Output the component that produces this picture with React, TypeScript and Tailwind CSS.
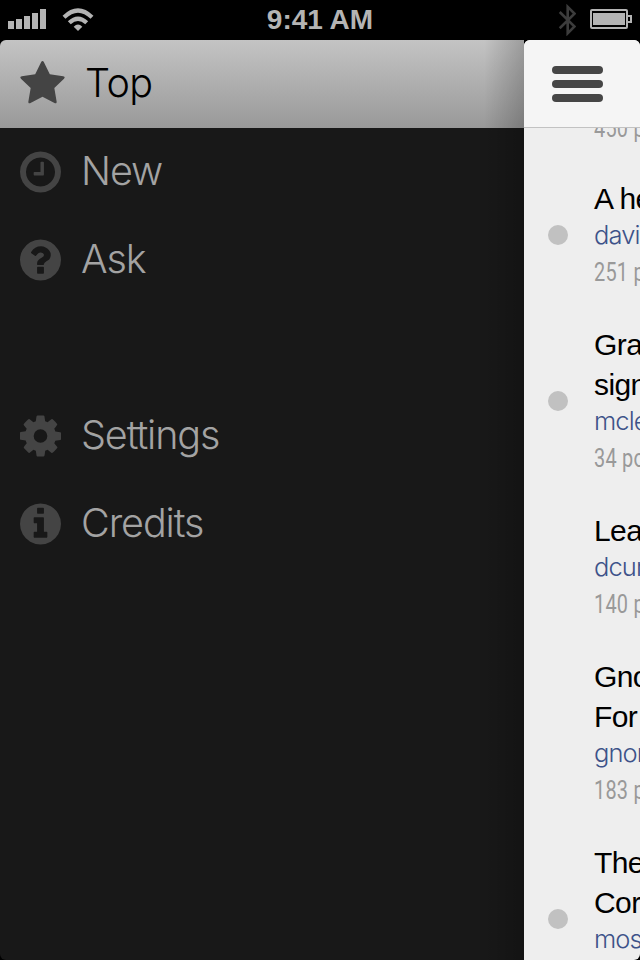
import type { ReactNode } from 'react';

const DISC = 'm0 0q0 209-103 385.5t-279.5 279.5-385.5 103-385.5-103-279.5-279.5-103-385.5 103-385.5 279.5-279.5 385.5-103 385.5 103 279.5 279.5 103 385.5z';

const ICONS = {
  star: 'M1728 647q0 22-26 48l-363 354 86 500q1 7 1 20 0 21-10.5 35.5t-30.5 14.5q-19 0-40-12l-449-236-449 236q-22 12-40 12-21 0-31.5-14.5t-10.5-35.5q0-6 2-20l86-500-364-354q-25-27-25-48 0-37 56-46l502-73 225-455q19-41 49-41t49 41l225 455 502 73q56 9 56 46z',
  clock: 'M1024 544v448q0 14-9 23t-23 9h-320q-14 0-23-9t-9-23v-64q0-14 9-23t23-9h224v-352q0-14 9-23t23-9h64q14 0 23 9t9 23zm416 352q0-148-73-273t-198-198-273-73-273 73-198 198-73 273 73 273 198 198 273 73 273-73 198-198 73-273zm224 0' + DISC,
  question: 'M1024 1376v-192q0-14-9-23t-23-9h-192q-14 0-23 9t-9 23v192q0 14 9 23t23 9h192q14 0 23-9t9-23zm256-672q0-88-55.5-163t-138.5-116-170-41q-243 0-371 213-15 24 8 42l132 100q7 6 19 6 16 0 25-12 53-68 86-92 34-24 86-24 48 0 85.5 26t37.5 59q0 38-20 61t-68 45q-63 28-115.5 86.5t-52.5 125.5v36q0 14 9 23t23 9h192q14 0 23-9t9-23q0-19 21.5-49.5t54.5-49.5q32-18 49-28.5t46-35 44.5-48 28-60.5 12.5-81zm384 192' + DISC,
  cog: 'M1152 896q0-106-75-181t-181-75-181 75-75 181 75 181 181 75 181-75 75-181zm512-109v222q0 12-8 23t-20 13l-185 28q-19 54-39 91 35 50 107 138 10 12 10 25t-9 23q-27 37-99 108t-94 71q-12 0-26-9l-138-108q-44 23-91 38-16 136-29 186-7 28-36 28h-222q-14 0-24.5-8.5t-11.5-21.5l-28-184q-49-16-90-37l-141 107q-10 9-25 9-14 0-25-11-126-114-165-168-7-10-7-23 0-12 8-23 15-21 51-66.5t54-70.5q-27-50-41-99l-183-27q-13-2-21-12.5t-8-23.5v-222q0-12 8-23t19-13l186-28q14-46 39-92-40-57-107-138-10-12-10-24 0-10 9-23 26-36 98.5-107.5t94.5-71.5q13 0 26 10l138 107q44-23 91-38 16-136 29-186 7-28 36-28h222q14 0 24.5 8.5t11.5 21.5l28 184q49 16 90 37l142-107q9-9 24-9 13 0 25 10 129 119 165 170 7 8 7 22 0 12-8 23-15 21-51 66.5t-54 70.5q26 50 41 98l183 28q13 2 21 12.5t8 23.5z',
  info: 'M1152 1376v-160q0-14-9-23t-23-9h-96v-512q0-14-9-23t-23-9h-320q-14 0-23 9t-9 23v160q0 14 9 23t23 9h96v320h-96q-14 0-23 9t-9 23v160q0 14 9 23t23 9h448q14 0 23-9t9-23zm-128-896v-160q0-14-9-23t-23-9h-192q-14 0-23 9t-9 23v160q0 14 9 23t23 9h192q14 0 23-9t9-23zm640 416' + DISC,
};

function MenuIcon({ name }: { name: keyof typeof ICONS }) {
  return (
    <svg viewBox="128 128 1536 1536" className="h-[42px] w-[41px] shrink-0 overflow-visible fill-[#444]">
      <path d={ICONS[name]} />
    </svg>
  );
}

function MenuRow({ icon, children }: { icon: keyof typeof ICONS; children: ReactNode }) {
  return (
    <div className="flex h-[88px] items-center pl-5 text-[39.5px] font-light text-[#a3a3a3]">
      <MenuIcon name={icon} />
      <span className="ml-5 tracking-[-1.1px]">{children}</span>
    </div>
  );
}

function StatusBar() {
  return (
    <div className="grid h-10 grid-cols-3 items-center bg-black">
      <div className="flex items-center pl-2">
        <div className="flex h-5 items-end gap-0.5 pb-px">
          <i className="h-2 w-1.5 bg-[#b4b4b4]" />
          <i className="h-2.5 w-1.5 bg-[#b4b4b4]" />
          <i className="h-[13px] w-1.5 bg-[#b4b4b4]" />
          <i className="h-4 w-1.5 bg-[#b4b4b4]" />
          <i className="h-5 w-1.5 bg-[#b4b4b4]" />
        </div>
        <svg viewBox="0 0 32 24" className="ml-4 h-6 w-8" fill="none" stroke="#b4b4b4">
          <path d="M2 9.2Q16-4.2 30 9.2" strokeWidth="4.2" />
          <path d="M7.3 14.8Q16 6.6 24.7 14.8" strokeWidth="4.2" />
          <path d="M11.7 18.8Q16 14.4 20.3 18.8L16 23Z" fill="#b4b4b4" stroke="none" />
        </svg>
      </div>
      <div className="text-center font-['Liberation_Sans',sans-serif] text-[28px] leading-10 font-bold text-[#b4b4b4]">9:41 AM</div>
      <div className="flex items-center justify-end pr-2">
        <svg viewBox="0 0 18 32" className="h-8 w-[18px]" fill="none" stroke="#3c3c3c" strokeWidth="2.6">
          <path d="M1.7 8L16.5 22.5L9.7 29.3V2.9L16.5 9.7L1.7 24.2" />
        </svg>
        <svg viewBox="0 0 42 20" className="ml-[14px] h-5 w-[42px] -translate-y-px">
          <rect x="1" y="1" width="36" height="18" rx="1" fill="none" stroke="#b4b4b4" strokeWidth="2" />
          <rect x="3" y="4" width="32" height="12" fill="#b4b4b4" />
          <path d="M38 7h3v6h-3" fill="none" stroke="#b4b4b4" strokeWidth="2" />
        </svg>
      </div>
    </div>
  );
}

interface Story {
  title: string[];
  author: string;
  points: string;
  unread?: boolean;
}

const STORIES: Story[] = [
  { title: ['A he'], author: 'davi', points: '251 p', unread: true },
  { title: ['Gra', 'sign'], author: 'mcle', points: '34 po', unread: true },
  { title: ['Lea'], author: 'dcur', points: '140 p' },
  { title: ['Gno', 'For'], author: 'gnor', points: '183 p' },
  { title: ['The', 'Cor'], author: 'mos', points: '', unread: true },
];

function Points({ children }: { children: ReactNode }) {
  return (
    <div className="h-9 origin-left scale-x-[0.78] whitespace-nowrap font-[Roboto,sans-serif] text-[25.5px] leading-[34px] tracking-[0.3px] text-[#999]">
      {children}
    </div>
  );
}

function StoryRow({ story }: { story: Story }) {
  return (
    <article className="flex shrink-0 items-center py-[17px]">
      <div className="flex w-[70px] shrink-0 pl-6">
        {story.unread && <span className="size-5 rounded-full bg-[#c1c1c1]" />}
      </div>
      <div className="w-40 shrink-0">
        {story.title.map((line) => (
          <div key={line} className="h-10 whitespace-nowrap font-['Liberation_Sans',sans-serif] text-[30px] leading-10 tracking-[-0.6px] text-black">
            {line}
          </div>
        ))}
        <div className="h-9 text-[25.5px] leading-[31px] font-light tracking-[-0.9px] text-[#3d5289]">{story.author}</div>
        <Points>{story.points}</Points>
      </div>
    </article>
  );
}

export default function App() {
  return (
    <div className="flex h-[960px] w-[640px] flex-col overflow-hidden bg-black font-[Inter,sans-serif]">
      <StatusBar />
      <div className="flex h-[920px]">
        <nav className="relative w-[524px] overflow-hidden rounded-l-[6px] bg-[#181818]">
          <div className="flex h-[88px] items-center bg-linear-to-b from-[#c4c4c4] to-[#999] pl-[22px] text-[39.5px] font-light text-black">
            <MenuIcon name="star" />
            <span className="ml-[22px] tracking-[-0.6px]">Top</span>
          </div>
          <MenuRow icon="clock">New</MenuRow>
          <MenuRow icon="question">Ask</MenuRow>
          <div className="h-[88px]" />
          <MenuRow icon="cog">Settings</MenuRow>
          <MenuRow icon="info">Credits</MenuRow>
          <div className="absolute inset-y-0 right-0 w-10 bg-linear-to-r from-transparent to-black/20" />
        </nav>
        <main className="flex w-[116px] flex-col overflow-hidden rounded-t-[6px] rounded-br-[6px] bg-[#eee]">
          <header className="flex h-[88px] shrink-0 flex-col justify-center gap-1.5 border-b border-[#c2c2c2] bg-[#f5f5f5] pl-7">
            <span className="h-2 w-[51px] rounded-full bg-[#464646]" />
            <span className="h-2 w-[51px] rounded-full bg-[#464646]" />
            <span className="h-2 w-[51px] rounded-full bg-[#464646]" />
          </header>
          <div className="flex min-h-0 flex-1 flex-col overflow-hidden">
            <div className="flex h-[34px] shrink-0 flex-col justify-end pb-[17px] pl-[70px]">
              <Points>450 p</Points>
            </div>
            {STORIES.map((story) => (
              <StoryRow key={story.author} story={story} />
            ))}
          </div>
        </main>
      </div>
    </div>
  );
}
